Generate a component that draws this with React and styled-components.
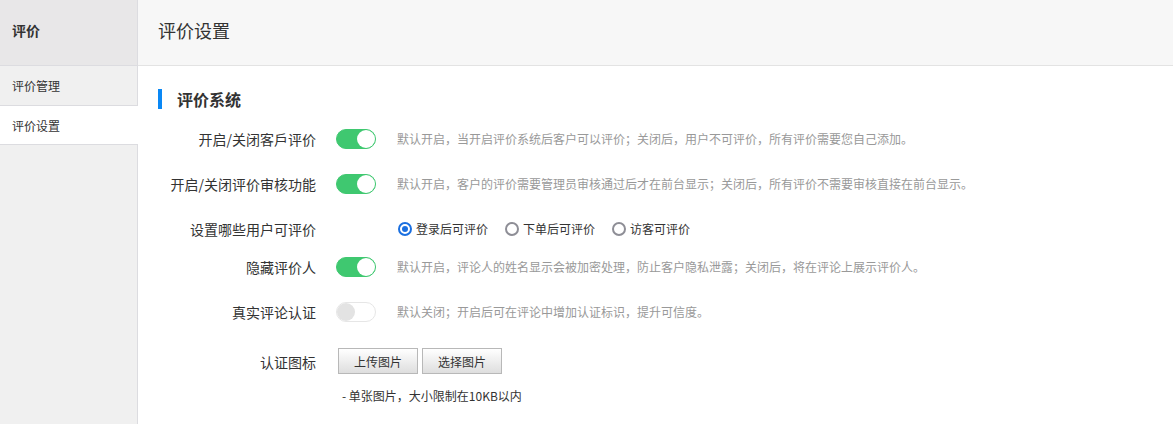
import React from "react";
import styled, { createGlobalStyle } from "styled-components";

const Global = createGlobalStyle`
  html, body, #root { margin: 0; padding: 0; height: 100%; }
  body {
    font-family: "Noto Sans CJK SC", "Microsoft YaHei", "Noto Sans", sans-serif;
    color: #333;
    background: #fff;
    overflow: hidden;
  }
  * { box-sizing: border-box; }
`;

const Page = styled.div`
  display: flex;
  height: 100%;
`;

const Sidebar = styled.aside`
  width: 138px;
  flex-shrink: 0;
  background: #f0f0f0;
  border-right: 1px solid #dcdce0;
  display: flex;
  flex-direction: column;
`;

const SideHead = styled.div`
  height: 66px;
  background: #e8e7e8;
  border-bottom: 1px solid #dcdce0;
  display: flex;
  align-items: center;
  padding-left: 12px;
  padding-bottom: 5px;
  font-size: 14px;
  font-weight: bold;
  color: #333;
`;

const SideItem = styled.div`
  height: ${(p) => (p.$active ? 39 : 40)}px;
  display: flex;
  align-items: center;
  padding-left: 12px;
  font-size: 12px;
  color: #333;
  background: ${(p) => (p.$active ? "#fff" : "#f0f0f0")};
  border-bottom: 1px solid #dcdce0;
  margin-right: ${(p) => (p.$active ? "-1px" : "0")};
`;

const Main = styled.main`
  flex: 1;
  display: flex;
  flex-direction: column;
  min-width: 0;
`;

const MainHead = styled.header`
  height: 66px;
  background: #f7f7f7;
  border-bottom: 1px solid #e3e3e3;
  display: flex;
  align-items: center;
  padding-left: 20px;
  padding-bottom: 5px;
  font-size: 18px;
  color: #333;
`;

const Content = styled.section`
  padding: 23px 0 0 20px;
  display: flex;
  flex-direction: column;
`;

const SectionTitle = styled.h2`
  margin: 0 0 20px;
  height: 20px;
  display: flex;
  align-items: center;
  border-left: 4px solid #0a88f5;
  padding-left: 15px;
  padding-bottom: 1px;
  font-size: 16px;
  font-weight: bold;
  color: #333;
`;

const Row = styled.div`
  display: flex;
  align-items: ${(p) => (p.$top ? "flex-start" : "center")};
  min-height: 20px;
  margin-bottom: ${(p) => p.$gap ?? 25}px;
`;

const Label = styled.div`
  width: 158px;
  flex-shrink: 0;
  text-align: right;
  font-size: 14px;
  line-height: 20px;
  color: #333;
  padding-top: ${(p) => (p.$top ? "1px" : "0")};
`;

const Control = styled.div`
  width: 40px;
  margin-left: 20px;
  flex-shrink: 0;
  display: flex;
`;

const Desc = styled.div`
  margin-left: 21px;
  font-size: 12px;
  color: #999;
  line-height: 20px;
  white-space: nowrap;
`;

const Switch = styled.span`
  position: relative;
  display: inline-block;
  width: 40px;
  height: 20px;
  border-radius: 10px;
  background: ${(p) => (p.$on ? "#3fc870" : "#fff")};
  border: 1px solid ${(p) => (p.$on ? "#3fc870" : "#e6e6e6")};
  &::after {
    content: "";
    position: absolute;
    top: 0px;
    ${(p) => (p.$on ? "right: 0px;" : "left: 0px;")}
    width: 18px;
    height: 18px;
    border-radius: 50%;
    background: ${(p) => (p.$on ? "#fff" : "#e3e3e3")};
  }
`;

const RadioGroup = styled.div`
  margin-left: 82px;
  display: flex;
  align-items: center;
  gap: 17px;
`;

const RadioItem = styled.label`
  display: flex;
  align-items: center;
  gap: 4px;
  font-size: 12px;
  color: #333;
  line-height: 20px;
`;

const RadioDot = styled.span`
  width: 14px;
  height: 14px;
  border-radius: 50%;
  border: 2px solid ${(p) => (p.$checked ? "#1a6fe0" : "#8e8e96")};
  display: inline-flex;
  align-items: center;
  justify-content: center;
  &::after {
    content: "";
    width: 6px;
    height: 6px;
    border-radius: 50%;
    background: ${(p) => (p.$checked ? "#1a6fe0" : "transparent")};
  }
`;

const Buttons = styled.div`
  margin-left: 22px;
  display: flex;
  gap: 4px;
  margin-top: -3px;
`;

const Button = styled.button`
  width: 80px;
  height: 26px;
  border: 1px solid #b8b8b8;
  background: linear-gradient(#ffffff, #dedede);
  font-family: inherit;
  font-size: 12px;
  color: #333;
  padding: 0;
  cursor: pointer;
`;

const Note = styled.div`
  margin: 13px 0 0 184px;
  font-size: 12px;
  color: #333;
  line-height: 18px;
`;

function Toggle({ on }) {
  return <Switch $on={on} />;
}

export default function App() {
  return (
    <>
      <Global />
      <Page>
        <Sidebar>
          <SideHead>评价</SideHead>
          <SideItem>评价管理</SideItem>
          <SideItem $active>评价设置</SideItem>
        </Sidebar>
        <Main>
          <MainHead>评价设置</MainHead>
          <Content>
            <SectionTitle>评价系统</SectionTitle>
            <Row>
              <Label>开启/关闭客戶评价</Label>
              <Control><Toggle on /></Control>
              <Desc>默认开启，当开启评价系统后客户可以评价；关闭后，用户不可评价，所有评价需要您自己添加。</Desc>
            </Row>
            <Row>
              <Label>开启/关闭评价审核功能</Label>
              <Control><Toggle on /></Control>
              <Desc>默认开启，客户的评价需要管理员审核通过后才在前台显示；关闭后，所有评价不需要审核直接在前台显示。</Desc>
            </Row>
            <Row $gap={18}>
              <Label>设置哪些用户可评价</Label>
              <RadioGroup>
                <RadioItem><RadioDot $checked />登录后可评价</RadioItem>
                <RadioItem><RadioDot />下单后可评价</RadioItem>
                <RadioItem><RadioDot />访客可评价</RadioItem>
              </RadioGroup>
            </Row>
            <Row>
              <Label>隐藏评价人</Label>
              <Control><Toggle on /></Control>
              <Desc>默认开启，评论人的姓名显示会被加密处理，防止客户隐私泄露；关闭后，将在评论上展示评价人。</Desc>
            </Row>
            <Row $gap={29}>
              <Label>真实评论认证</Label>
              <Control><Toggle /></Control>
              <Desc>默认关闭；开启后可在评论中增加认证标识，提升可信度。</Desc>
            </Row>
            <Row $top $gap={0}>
              <Label $top>认证图标</Label>
              <Buttons>
                <Button>上传图片</Button>
                <Button>选择图片</Button>
              </Buttons>
            </Row>
            <Note>- 单张图片，大小限制在10KB以内</Note>
          </Content>
        </Main>
      </Page>
    </>
  );
}
